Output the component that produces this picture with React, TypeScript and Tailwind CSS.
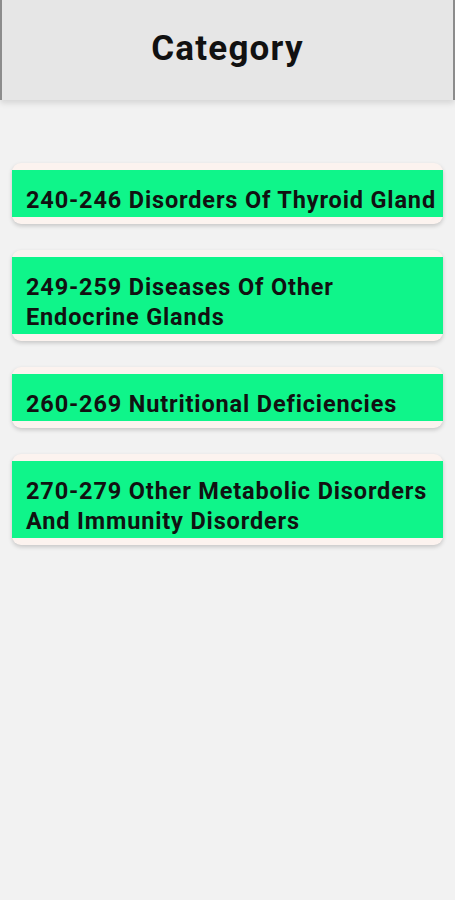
import React from "react";

const categories = [
  "240-246 Disorders Of Thyroid Gland",
  "249-259 Diseases Of Other Endocrine Glands",
  "260-269 Nutritional Deficiencies",
  "270-279 Other Metabolic Disorders And Immunity Disorders",
];

export default function App() {
  return (
    <div
      className="min-h-[900px] w-[455px] bg-[#f2f2f2]"
      style={{ fontFamily: "Roboto, 'Noto Sans', sans-serif" }}
    >
      {/* Header */}
      <div className="relative z-10 flex h-[100px] items-center justify-center border-x-2 border-[#8c8c8c] bg-[#e6e6e6] shadow-[0_3px_6px_rgba(0,0,0,0.12)]">
        <h1 className="pb-[2px] text-[35px] font-bold tracking-[1.2px] text-[#111]">Category</h1>
      </div>

      {/* List */}
      <div className="flex flex-col gap-[26px] px-[12px] pt-[63px]">
        {categories.map((c) => (
          <div
            key={c}
            className="rounded-[9px] bg-[#fcf3ef] py-[7px] shadow-[0_2px_4px_rgba(0,0,0,0.18)]"
          >
            <div className="bg-[#0ff58a] pl-[14px] pr-[6px] pt-[15px] pb-[2px] text-[23.5px] font-bold leading-[30px] tracking-[0.85px] text-[#111]">
              {c}
            </div>
          </div>
        ))}
      </div>
    </div>
  );
}
